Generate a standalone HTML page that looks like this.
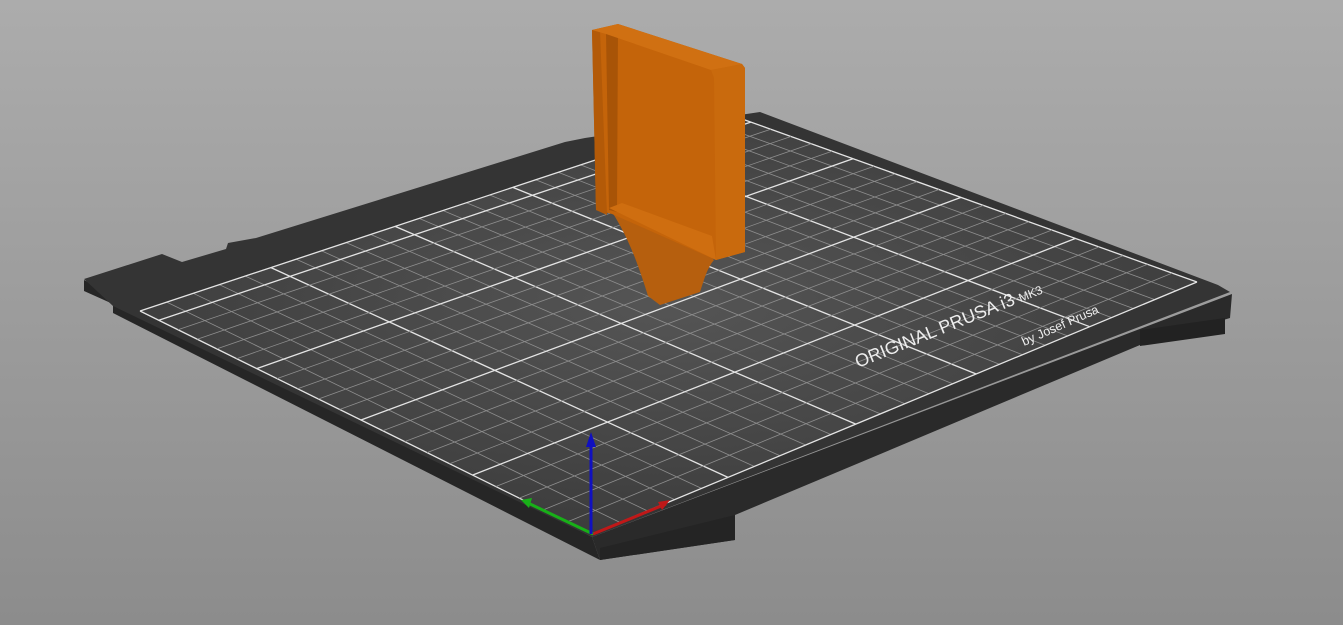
<!DOCTYPE html>
<html><head><meta charset="utf-8"><style>
html,body{margin:0;padding:0;width:1343px;height:625px;overflow:hidden;background:linear-gradient(#acacac,#8c8c8c);}
svg{display:block}
</style></head><body>
<svg id="s" width="1343" height="625" viewBox="0 0 1343 625" xmlns="http://www.w3.org/2000/svg">
<defs>
<radialGradient id="gg" cx="0.5" cy="0.45" r="0.6"><stop offset="0" stop-color="#555"/><stop offset="1" stop-color="#3a3a3a"/></radialGradient>
</defs>
<polygon points="84,280 84,291 113,304 113,313 600,560 592,537" fill="#262626"/>
<polygon points="592,537 1232,294 1230,318 1140,345 735,515 735,540 600,560" fill="#2a2a2a"/>
<polygon points="1140,330 1225,318 1225,334 1140,346" fill="#222"/>
<polygon points="600,548 735,515 735,540 600,560" fill="#242424"/>
<polygon points="84,279 162,254 182,262 226,249 228,243 256,238 565,142 585,138 760,112 1218,285 1230,292 592,537 113,306" fill="#343434"/>
<g id="grid"></g>
<g font-family="Liberation Sans, sans-serif" fill="#eee">
<text x="0" y="0" font-size="18" transform="translate(858,368) rotate(-22)">ORIGINAL PRUSA i3 <tspan font-size="12">MK3</tspan></text>
<text x="0" y="0" font-size="12.5" transform="translate(1024,346) rotate(-24)">by Josef Prusa</text>
</g>
<line x1="593" y1="534" x2="666" y2="504" stroke="#c01818" stroke-width="3"/>
<polygon points="670,500 658,502 662,510" fill="#c01818"/>
<line x1="593" y1="534" x2="528" y2="503" stroke="#18b018" stroke-width="3"/>
<polygon points="521,500 532,498 529,508" fill="#18b018"/>
<line x1="591" y1="534" x2="591" y2="445" stroke="#1010c0" stroke-width="3"/>
<polygon points="591,432 586,447 596,447" fill="#1010c0"/>
<path d="M612,212 C630,240 640,270 648,296 L660,305 L700,292 C704,280 707,268 714,260 L700,245 Z" fill="#b65f0e"/>
<polygon points="592,30 618,24 742,64 745,68 745,252 716,260 612,214 596,210" fill="#c4640a"/>
<polygon points="592,30 600,30 607,215 596,210" fill="#b35a08"/>
<polygon points="606,33 618,26 617,212 609,210" fill="#a85407"/>
<polygon points="609,208 622,203 712,236 716,260" fill="#cf6e10"/>
<polygon points="711,70 742,64 745,68 745,252 716,260 714,78" fill="#c96a0d"/>
<polygon points="592,30 618,24 742,64 711,70 606,34" fill="#d07012"/>
</svg>
<script>
(function(){
var P=[[592,534],[1197,282],[731,115],[140,311]];
var x0=P[0][0],y0=P[0][1],x1=P[1][0],y1=P[1][1],x2=P[2][0],y2=P[2][1],x3=P[3][0],y3=P[3][1];
var dx1=x1-x2,dx2=x3-x2,dx3=x0-x1+x2-x3,dy1=y1-y2,dy2=y3-y2,dy3=y0-y1+y2-y3;
var den=dx1*dy2-dx2*dy1;
var g=(dx3*dy2-dx2*dy3)/den,h=(dx1*dy3-dx3*dy1)/den;
var a=x1-x0+g*x1,b=x3-x0+h*x3,c=x0,d=y1-y0+g*y1,e=y3-y0+h*y3,f=y0;
function m(u,v){var w=g*u+h*v+1;return [(a*u+b*v+c)/w,(d*u+e*v+f)/w];}
var s='';
var q=[m(0,0),m(1,0),m(1,1),m(0,1)];
s+='<polygon points="'+q.map(function(p){return p[0].toFixed(1)+','+p[1].toFixed(1)}).join(' ')+'" fill="url(#gg)"/>';
function ln(p,r,maj){s+='<line x1="'+p[0].toFixed(1)+'" y1="'+p[1].toFixed(1)+'" x2="'+r[0].toFixed(1)+'" y2="'+r[1].toFixed(1)+'" stroke="'+(maj?'#e4e4e4':'#8e8e8e')+'" stroke-width="'+(maj?1.3:0.8)+'"/>';}
var i;
for(i=0;i<=25;i++){var u=i/25;ln(m(u,0),m(u,1),i%5==0);}
for(i=0;i<=21;i++){var v=i/21;ln(m(0,v),m(1,v),i%5==0||i==21);}
document.getElementById('grid').innerHTML=s;
})();
</script>
</body></html>
